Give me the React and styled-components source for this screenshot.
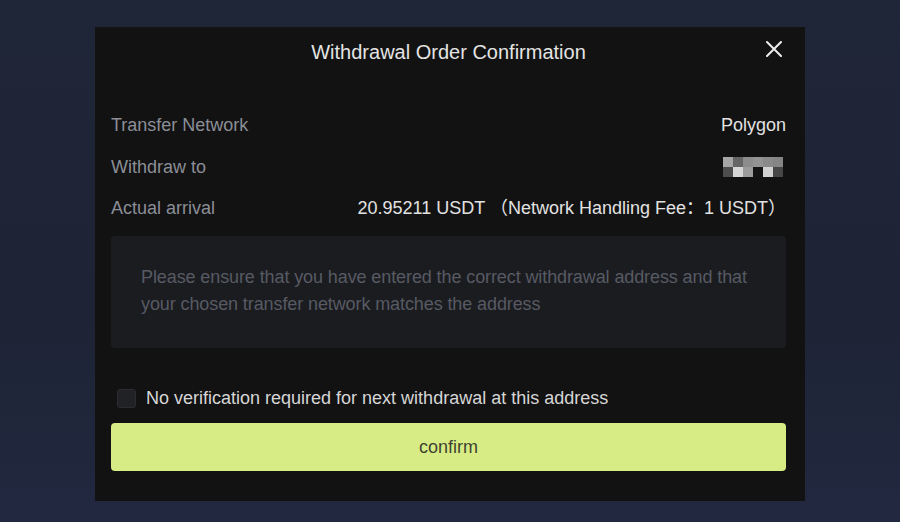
import styled, { createGlobalStyle } from "styled-components";

const GlobalStyle = createGlobalStyle`
  html, body {
    margin: 0;
    padding: 0;
    background: #1f2535;
  }
  body {
    font-family: "Liberation Sans", Arial, "Noto Sans CJK SC", sans-serif;
  }
`;

const rows = [
  { label: "Transfer Network", value: "Polygon" },
  { label: "Withdraw to", value: null },
  {
    label: "Actual arrival",
    value: "20.95211 USDT （Network Handling Fee：1 USDT）",
  },
];

// mosaic colours for the blurred address, two rows of six
const mosaic = [
  "#a6a6a6", "#666666", "#8c8c8c", "#939393", "#8a8a8a", "#858585",
  "#4c4c4c", "#d6d6d6", "#9c9c9c", "#141414", "#d2d2d2", "#474747",
];

function App() {
  return (
    <Page>
      <GlobalStyle />
      <Modal>
        <Header>
          <Title>Withdrawal Order Confirmation</Title>
          <Close aria-label="close">
            <svg width="16" height="16" viewBox="0 0 16 16">
              <path
                d="M1 1 L15 15 M15 1 L1 15"
                stroke="#ececec"
                strokeWidth="2"
                strokeLinecap="round"
              />
            </svg>
          </Close>
        </Header>
        <Details>
          {rows.map((row) => (
            <Row key={row.label}>
              <Label>{row.label}</Label>
              {row.value ? (
                <Value>{row.value}</Value>
              ) : (
                <Mosaic>
                  {mosaic.map((c, i) => (
                    <Cell key={i} $color={c} />
                  ))}
                </Mosaic>
              )}
            </Row>
          ))}
        </Details>
        <Notice>
          Please ensure that you have entered the correct withdrawal address and
          that your chosen transfer network matches the address
        </Notice>
        <CheckRow>
          <Box />
          <CheckText>No verification required for next withdrawal at this address</CheckText>
        </CheckRow>
        <Confirm>confirm</Confirm>
      </Modal>
    </Page>
  );
}

const Page = styled.div`
  width: 900px;
  height: 522px;
  padding-top: 27px;
  box-sizing: border-box;
  background: linear-gradient(180deg, #1f2638 0%, #1e2435 60%, #212840 100%);
  display: flex;
  justify-content: center;
`;

const Modal = styled.div`
  width: 710px;
  height: 474px;
  box-sizing: border-box;
  background: #121212;
  padding: 0 19px 0 16px;
  display: flex;
  flex-direction: column;
`;

const Header = styled.div`
  position: relative;
  height: 50px;
  display: flex;
  align-items: center;
  justify-content: center;
`;

const Title = styled.h2`
  margin: 0;
  font-size: 20px;
  font-weight: 400;
  color: #e4e4e4;
`;

const Close = styled.button`
  position: absolute;
  right: 4px;
  top: 14px;
  background: transparent;
  border: 0;
  padding: 0;
  display: flex;
  cursor: pointer;
`;

const Details = styled.div`
  margin-top: 37px;
  display: flex;
  flex-direction: column;
  gap: 19.5px;
`;

const Row = styled.div`
  display: flex;
  justify-content: space-between;
  align-items: center;
  height: 22px;
`;

const Label = styled.span`
  font-size: 18px;
  line-height: 22px;
  color: #8b8e97;
`;

const Value = styled.span`
  font-size: 18px;
  line-height: 22px;
  height: 22px;
  color: #e2e2e2;
  white-space: pre;
`;

const Mosaic = styled.div`
  display: grid;
  grid-template-columns: repeat(6, 10px);
  grid-auto-rows: 10px;
  margin-right: 3px;
`;

const Cell = styled.div`
  background: ${(p) => p.$color};
`;

const Notice = styled.div`
  margin-top: 17px;
  height: 112px;
  box-sizing: border-box;
  background: #1b1c20;
  border-radius: 4px;
  padding: 28px 30px;
  font-size: 18px;
  letter-spacing: -0.1px;
  line-height: 27px;
  color: #575a63;
`;

const CheckRow = styled.div`
  margin-top: 39px;
  height: 22px;
  display: flex;
  align-items: center;
  gap: 10px;
  padding-left: 6px;
`;

const Box = styled.span`
  width: 19px;
  height: 19px;
  box-sizing: border-box;
  border-radius: 3px;
  background: #202226;
  border: 1px solid #2a2c31;
`;

const CheckText = styled.span`
  font-size: 18px;
  color: #d6d6d6;
`;

const Confirm = styled.button`
  margin-top: 14px;
  height: 48px;
  width: 100%;
  border: 0;
  border-radius: 4px;
  background: #d8ec85;
  color: #3e4430;
  font-family: inherit;
  font-size: 18px;
  cursor: pointer;
`;

export default App;
